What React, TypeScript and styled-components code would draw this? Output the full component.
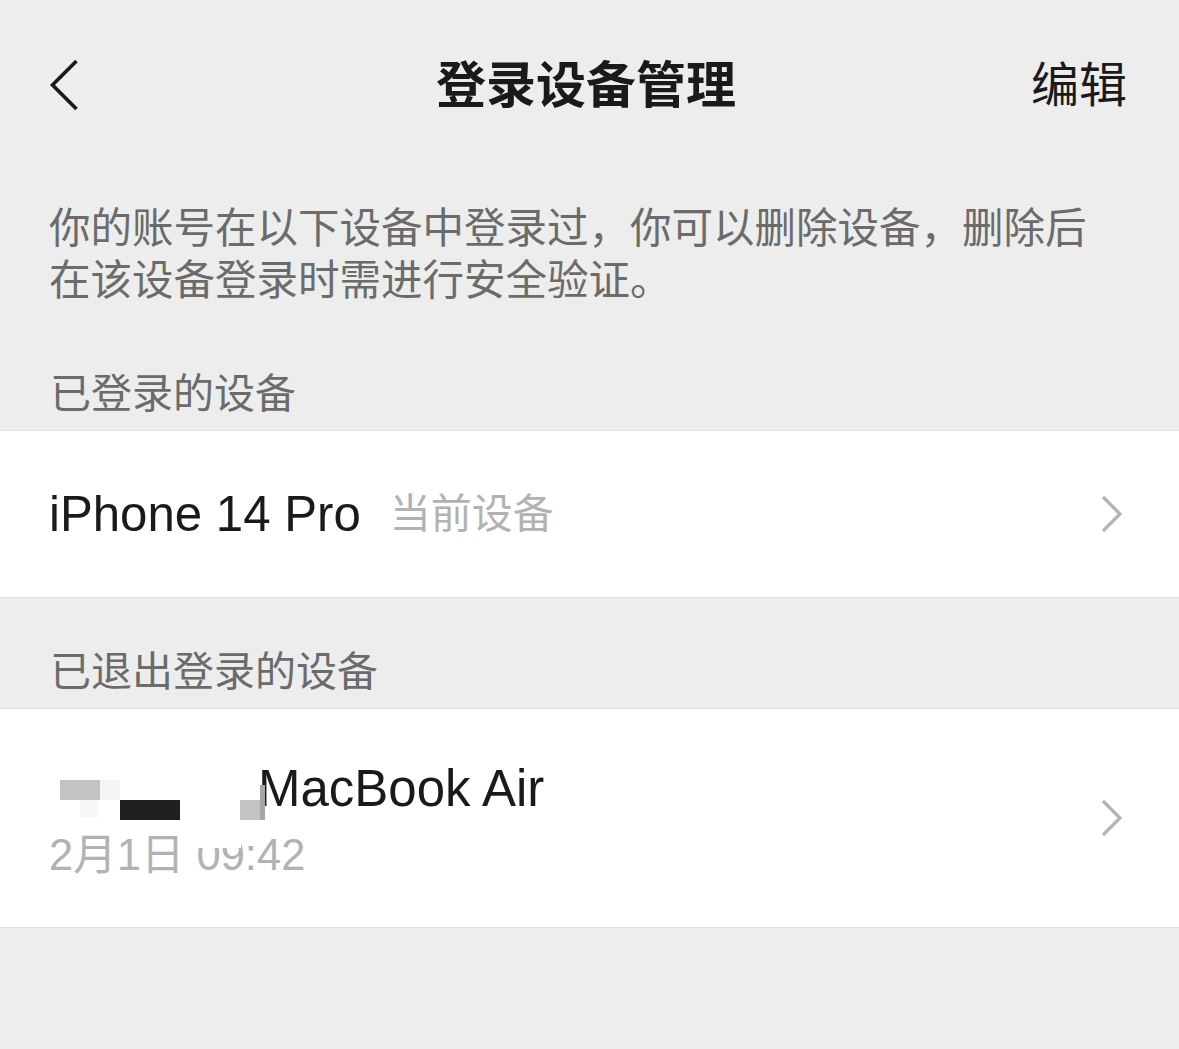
import React from "react";
import styled, { createGlobalStyle } from "styled-components";

const GlobalStyle = createGlobalStyle`
  html, body { margin: 0; padding: 0; background: #ededed; }
  body {
    font-family: "Liberation Sans", "Noto Sans CJK SC", sans-serif;
    -webkit-font-smoothing: antialiased;
  }
`;

const Page = styled.div`
  min-height: 1049px;
  background: #ededed;
  display: flex;
  flex-direction: column;
`;

const NavBar = styled.header`
  height: 172px;
  display: grid;
  grid-template-columns: 1fr auto 1fr;
  align-items: center;
  padding: 0 52px 0 49px;
`;

const BackButton = styled.button`
  justify-self: start;
  border: 0;
  background: none;
  padding: 0;
  display: flex;
  align-items: center;
  margin-top: -2px;
`;

const Title = styled.h1`
  margin: 0 0 0 -4px;
  font-size: 50px;
  line-height: 60px;
  font-weight: 700;
  color: #1a1a1a;
  letter-spacing: 0;
`;

const EditButton = styled.button`
  justify-self: end;
  border: 0;
  background: none;
  padding: 0;
  font-family: inherit;
  font-size: 48px;
  line-height: 60px;
  color: #1a1a1a;
`;

const Description = styled.p`
  margin: 31px 0 0;
  padding: 0 80px 0 49px;
  font-size: 41.5px;
  line-height: 52px;
  color: #6b6b6b;
`;

const SectionLabel = styled.div<{ $top: number }>`
  padding: ${(p) => p.$top}px 49px 10px 50px;
  font-size: 41px;
  line-height: 52px;
  color: #6b6b6b;
`;

const Card = styled.section`
  background: #ffffff;
  border-top: 1px solid #e0e0e0;
  border-bottom: 1px solid #e0e0e0;
`;

const DeviceRow = styled.div<{ $height?: number }>`
  display: flex;
  align-items: center;
  justify-content: space-between;
  min-height: ${(p) => p.$height ?? 0}px;
  padding: 0 55px 0 49px;
  box-sizing: border-box;
`;

const RowMain = styled.div`
  display: flex;
  align-items: center;
  gap: 29px;
`;

const DeviceName = styled.span<{ $size: number }>`
  font-size: ${(p) => p.$size}px;
  line-height: 60px;
  color: #1a1a1a;
`;

const CurrentTag = styled.span`
  font-size: 41px;
  line-height: 60px;
  color: #b2b2b2;
`;

const InfoColumn = styled.div`
  position: relative;
  display: flex;
  flex-direction: column;
  gap: 12px;
  padding: 50px 0 48px;
`;

const NameLine = styled.div`
  padding-left: 209px;
  display: flex;
`;

const DateLine = styled.div`
  font-size: 43.5px;
  line-height: 48px;
  color: #b2b2b2;
`;

const Mosaic = styled.span<{ $x: number; $y: number; $w: number; $h: number; $c: string }>`
  position: absolute;
  left: ${(p) => p.$x}px;
  top: ${(p) => p.$y + 50}px;
  width: ${(p) => p.$w}px;
  height: ${(p) => p.$h}px;
  background: ${(p) => p.$c};
`;

const Back = () => (
  <svg width="30" height="54" viewBox="0 0 30 54" fill="none">
    <path d="M27.5 3 L3.5 27 L27.5 51" stroke="#1a1a1a" strokeWidth="3.6" strokeLinecap="butt" strokeLinejoin="miter" />
  </svg>
);

const Chevron = () => (
  <svg width="24" height="40" viewBox="0 0 24 40" fill="none">
    <path d="M3 3 L20 20 L3 37" stroke="#b3b3b3" strokeWidth="3.2" />
  </svg>
);

const mosaic = [
  { x: 11, y: 21, w: 40, h: 20, c: "#c3c3c3" },
  { x: 51, y: 21, w: 20, h: 20, c: "#f5f5f5" },
  { x: 31, y: 41, w: 18, h: 17, c: "#f7f7f7" },
  { x: 71, y: 41, w: 60, h: 20, c: "#1f1f1f" },
  { x: 191, y: 41, w: 20, h: 20, c: "#c3c3c3" },
  { x: 211, y: 26, w: 5, h: 35, c: "#a6a6a6" },
  { x: 140, y: 72, w: 52, h: 17, c: "#ffffff" },
];

export default function App() {
  return (
    <Page>
      <GlobalStyle />
      <NavBar>
        <BackButton aria-label="返回">
          <Back />
        </BackButton>
        <Title>登录设备管理</Title>
        <EditButton>编辑</EditButton>
      </NavBar>

      <Description>
        你的账号在以下设备中登录过，你可以删除设备，删除后在该设备登录时需进行安全验证。
      </Description>

      <SectionLabel $top={61}>已登录的设备</SectionLabel>
      <Card>
        <DeviceRow $height={166}>
          <RowMain>
            <DeviceName $size={49.2}>iPhone 14 Pro</DeviceName>
            <CurrentTag>当前设备</CurrentTag>
          </RowMain>
          <Chevron />
        </DeviceRow>
      </Card>

      <SectionLabel $top={48}>已退出登录的设备</SectionLabel>
      <Card>
        <DeviceRow>
          <InfoColumn>
            <NameLine>
              <DeviceName $size={51}>MacBook Air</DeviceName>
            </NameLine>
            <DateLine>2月1日 09:42</DateLine>
            {mosaic.map((m, i) => (
              <Mosaic key={i} $x={m.x} $y={m.y} $w={m.w} $h={m.h} $c={m.c} />
            ))}
          </InfoColumn>
          <Chevron />
        </DeviceRow>
      </Card>
    </Page>
  );
}
